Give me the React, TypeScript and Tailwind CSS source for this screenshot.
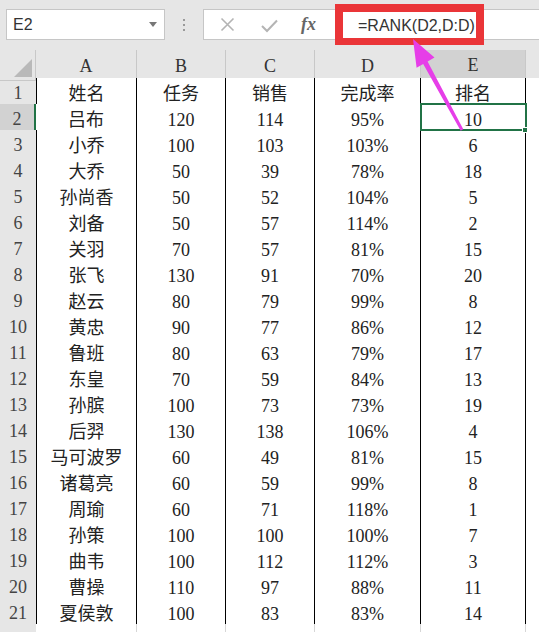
import React from 'react';

type Row = [string, string, string, string, string];

const rows: Row[] = [
  ['姓名', '任务', '销售', '完成率', '排名'],
  ['吕布', '120', '114', '95%', '10'],
  ['小乔', '100', '103', '103%', '6'],
  ['大乔', '50', '39', '78%', '18'],
  ['孙尚香', '50', '52', '104%', '5'],
  ['刘备', '50', '57', '114%', '2'],
  ['关羽', '70', '57', '81%', '15'],
  ['张飞', '130', '91', '70%', '20'],
  ['赵云', '80', '79', '99%', '8'],
  ['黄忠', '90', '77', '86%', '12'],
  ['鲁班', '80', '63', '79%', '17'],
  ['东皇', '70', '59', '84%', '13'],
  ['孙膑', '100', '73', '73%', '19'],
  ['后羿', '130', '138', '106%', '4'],
  ['马可波罗', '60', '49', '81%', '15'],
  ['诸葛亮', '60', '59', '99%', '8'],
  ['周瑜', '60', '71', '118%', '1'],
  ['孙策', '100', '100', '100%', '7'],
  ['曲韦', '100', '112', '112%', '3'],
  ['曹操', '110', '97', '88%', '11'],
  ['夏侯敦', '100', '83', '83%', '14'],
];

const cellFont = "font-['Liberation_Serif','Noto_Sans_CJK_SC',serif]";
const gridCols = 'grid grid-cols-[36px_101px_89px_89px_106px_105px_1fr]';

const FormulaBar = () => (
  <div className="flex h-[50px] items-start bg-[#e6e6e6] pl-[6px] pt-[9px] font-['Liberation_Sans','Noto_Sans_CJK_SC',sans-serif]">
    {/* name box */}
    <div className="flex h-[31px] w-[159px] items-center justify-between border border-[#c6c6c6] bg-white pl-[6px] pr-[7px]">
      <span className="text-[16px] text-[#333]">E2</span>
      <svg width="8" height="5" viewBox="0 0 8 5">
        <path d="M0 0 L8 0 L4 5 Z" fill="#777" />
      </svg>
    </div>
    {/* grip dots */}
    <div className="ml-[17px] flex h-[31px] w-[4px] flex-col items-center justify-center gap-[3px]">
      <span className="h-[2px] w-[2px] bg-[#999]" />
      <span className="h-[2px] w-[2px] bg-[#999]" />
      <span className="h-[2px] w-[2px] bg-[#999]" />
    </div>
    {/* formula box */}
    <div className="ml-[17px] flex h-[31px] flex-1 items-center border border-r-0 border-[#c6c6c6] bg-white">
      <svg className="ml-[16px]" width="15" height="15" viewBox="0 0 15 15">
        <path d="M1.5 1.5 L13.5 13.5 M13.5 1.5 L1.5 13.5" stroke="#b4b4b4" strokeWidth="1.6" />
      </svg>
      <svg className="ml-[26px] mt-[2px]" width="17" height="14" viewBox="0 0 17 14">
        <path d="M1 7 L6 12 L16 1.5" stroke="#b4b4b4" strokeWidth="2" fill="none" />
      </svg>
      <span className="ml-[23px] font-['Liberation_Serif',serif] text-[18px] italic font-bold text-[#666]">fx</span>
    </div>
  </div>
);

const HeaderRow = () => (
  <div className={`${gridCols} h-[28px] bg-[#e6e6e6] ${cellFont} text-[18px] text-[#333]`}>
    <div className="relative border-b border-r border-[#c8c8c8]">
      <svg className="absolute bottom-[3px] right-[3px]" width="18" height="18" viewBox="0 0 18 18">
        <path d="M18 0 L18 18 L0 18 Z" fill="#b9b9b9" />
      </svg>
    </div>
    {['A', 'B', 'C', 'D'].map((c) => (
      <div key={c} className="flex items-center justify-center border-b border-r border-b-black border-r-[#c8c8c8] pt-[2px]">
        {c}
      </div>
    ))}
    <div className="flex items-center justify-center border-b-2 border-r border-b-[#217346] border-r-[#c8c8c8] bg-[#d2d2d2] pt-[2px]">
      E
    </div>
    <div className="border-b border-[#c8c8c8]" />
  </div>
);

const DataRow = ({ index, row }: { index: number; row: Row }) => {
  const selected = index === 2;
  return (
    <div className={`${gridCols} h-[26px] ${cellFont} text-[18px]`}>
      <div
        className={`flex items-center justify-center border-b border-[#cfcfcf] pt-[2px] text-[#444] ${
          selected ? 'border-r-2 border-r-[#217346] bg-[#d2d2d2]' : 'bg-[#e6e6e6]'
        }`}
      >
        {index}
      </div>
      {row.map((v, i) => (
        <div
          key={i}
          className={`flex items-center justify-center border-b border-r border-black bg-white pt-[2px] leading-none text-[#222] ${
            i === 0 && !selected ? 'border-l' : ''
          }`}
        >
          {v}
        </div>
      ))}
      <div className="border-b border-[#d6d6d6] bg-white" />
    </div>
  );
};

// row 22 only peeks in at the bottom edge, its number is hidden
const EmptyRow = () => (
  <div className={`${gridCols} h-[26px]`}>
    <div className="bg-[#e6e6e6]" />
    <div className="border-r border-[#d6d6d6] bg-white" />
    <div className="border-r border-[#d6d6d6] bg-white" />
    <div className="border-r border-[#d6d6d6] bg-white" />
    <div className="border-r border-[#d6d6d6] bg-white" />
    <div className="border-r border-[#d6d6d6] bg-white" />
    <div className="bg-white" />
  </div>
);

export default function App() {
  return (
    <div className="relative h-[632px] w-[539px] overflow-hidden bg-[#e6e6e6]">
      <FormulaBar />
      <HeaderRow />
      {rows.map((r, i) => (
        <DataRow key={i} index={i + 1} row={r} />
      ))}
      <EmptyRow />

      {/* active cell E2 */}
      <div className="pointer-events-none absolute left-[420px] top-[103px] h-[28px] w-[107px] border-2 border-[#217346]" />
      <div className="pointer-events-none absolute left-[522px] top-[127px] h-[6px] w-[6px] border border-white bg-[#217346]" />

      {/* annotation box round the formula */}
      <div className="absolute left-[335px] top-[4px] flex h-[41px] w-[149px] items-center border-[8px] border-b-[7px] border-[#ea3538] bg-white pl-[15px] pt-[1px] font-['Liberation_Sans',sans-serif] text-[16px] text-[#333]">
        =RANK(D2,D:D)
      </div>

      {/* annotation arrow */}
      <svg className="pointer-events-none absolute left-0 top-0" width="539" height="632" viewBox="0 0 539 632">
        <polygon
          points="413,39 434.5,57.5 427.6,61.6 463.3,129.3 460.7,130.7 423.2,64 416.6,67.8"
          fill="#e63ee8"
        />
      </svg>
    </div>
  );
}
